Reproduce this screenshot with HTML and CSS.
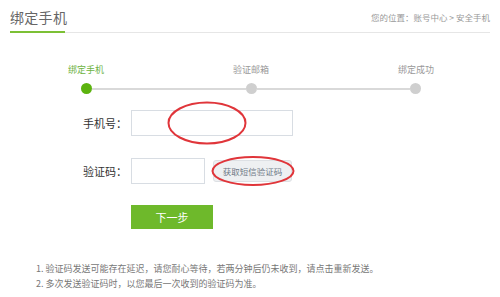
FILE: index.html
```html
<!DOCTYPE html>
<html lang="zh-CN">
<head>
<meta charset="utf-8">
<link rel="stylesheet" href="styles.css">
</head>
<body>
<div class="page">
  <div class="header">
    <div class="title">绑定手机</div>
    <div class="crumb">您的位置：账号中心 &gt; 安全手机</div>
  </div>
  <div class="steps">
    <div class="labels">
      <span class="lab active">绑定手机</span>
      <span class="lab">验证邮箱</span>
      <span class="lab">绑定成功</span>
    </div>
    <div class="track">
      <span class="dot active"></span>
      <span class="line"></span>
      <span class="dot"></span>
      <span class="line"></span>
      <span class="dot"></span>
    </div>
  </div>
  <div class="form">
    <div class="row r1">
      <label class="flabel">手机号：</label>
      <div class="field">
        <div class="input wide"></div>
        <svg class="ring ring1" width="82" height="46" viewBox="0 0 82 46"><ellipse cx="41" cy="23" rx="38.5" ry="20.5" fill="none" stroke="#e0353a" stroke-width="2"/></svg>
      </div>
    </div>
    <div class="row r2">
      <label class="flabel">验证码：</label>
      <div class="field">
        <div class="input narrow"></div>
        <div class="codebtn">获取短信验证码</div>
        <svg class="ring ring2" width="86" height="34" viewBox="0 0 86 34"><ellipse cx="43" cy="17" rx="40.5" ry="14" fill="none" stroke="#e0353a" stroke-width="2"/></svg>
      </div>
    </div>
    <div class="row r3">
      <span class="flabel"></span>
      <div class="next">下一步</div>
    </div>
  </div>
  <div class="notes">
    <p>1. 验证码发送可能存在延迟，请您耐心等待，若两分钟后仍未收到，请点击重新发送。</p>
    <p>2. 多次发送验证码时，以您最后一次收到的验证码为准。</p>
  </div>
</div>
</body>
</html>
```

FILE: styles.css
```css
* { box-sizing: border-box; }
html, body { margin: 0; padding: 0; background: #fff; }
body { font-family: "Noto Sans CJK SC", "Noto Sans", sans-serif; color: #333; width: 500px; height: 297px; overflow: hidden; }
.page { padding-top: 6px; }
.header {
  margin: 0 10px;
  height: 27px;
  border-bottom: 1px solid #e6e6e6;
  display: flex;
  justify-content: space-between;
  align-items: flex-end;
}
.title {
  font-size: 14px;
  line-height: 20px;
  color: #666;
  white-space: nowrap;
  letter-spacing: 0.3px;
  padding: 0 0 4px 0;
  border-bottom: 2px solid #7cc035;
  margin-bottom: -1px;
  width: 55px;
}
.crumb {
  font-size: 8.5px;
  color: #999;
  line-height: 14px;
  padding-bottom: 8px;
  white-space: nowrap;
}
.steps { width: 360px; margin: 30px 0 0 71px; }
.labels { display: flex; justify-content: space-between; font-size: 9px; line-height: 14px; color: #999; }
.lab { width: 30px; text-align: center; white-space: nowrap; display: flex; justify-content: center; }
.lab.active { color: #6db33f; }
.track { display: flex; align-items: center; margin-top: 6px; padding: 0 10px; }
.dot { width: 11px; height: 11px; border-radius: 50%; background: #cfcfcf; flex: none; }
.dot.active { background: #5cb30f; }
.line { flex: 1; height: 2px; background: #d9d9d9; }
.form { margin: 16px 0 0 83px; }
.row { display: flex; align-items: center; }
.flabel { width: 48px; font-size: 11px; color: #333; }
.field { position: relative; display: flex; align-items: center; }
.input { height: 26px; border: 1px solid #d8dde3; background: #fff; }
.input.wide { width: 162px; }
.input.narrow { width: 74px; }
.r2 { margin-top: 22px; }
.codebtn {
  margin-left: 8px;
  width: 79px; height: 22px;
  background: #eef0f2;
  border: 1px solid #dde0e4;
  border-radius: 3px;
  font-size: 8.5px; color: #6f7a86;
  display: flex; align-items: center; justify-content: center;
}
.ring { position: absolute; }
.ring1 { left: 35px; top: -10px; }
.ring2 { left: 79px; top: -4px; }
.r3 { margin-top: 21px; }
.next {
  width: 82px; height: 24px;
  background: #6eb92b;
  color: #fff; font-size: 11px;
  display: flex; align-items: center; justify-content: center;
}
.notes { margin: 32px 0 0 36px; font-size: 9px; color: #777; }
.notes p { margin: 0; line-height: 15px; }
```
